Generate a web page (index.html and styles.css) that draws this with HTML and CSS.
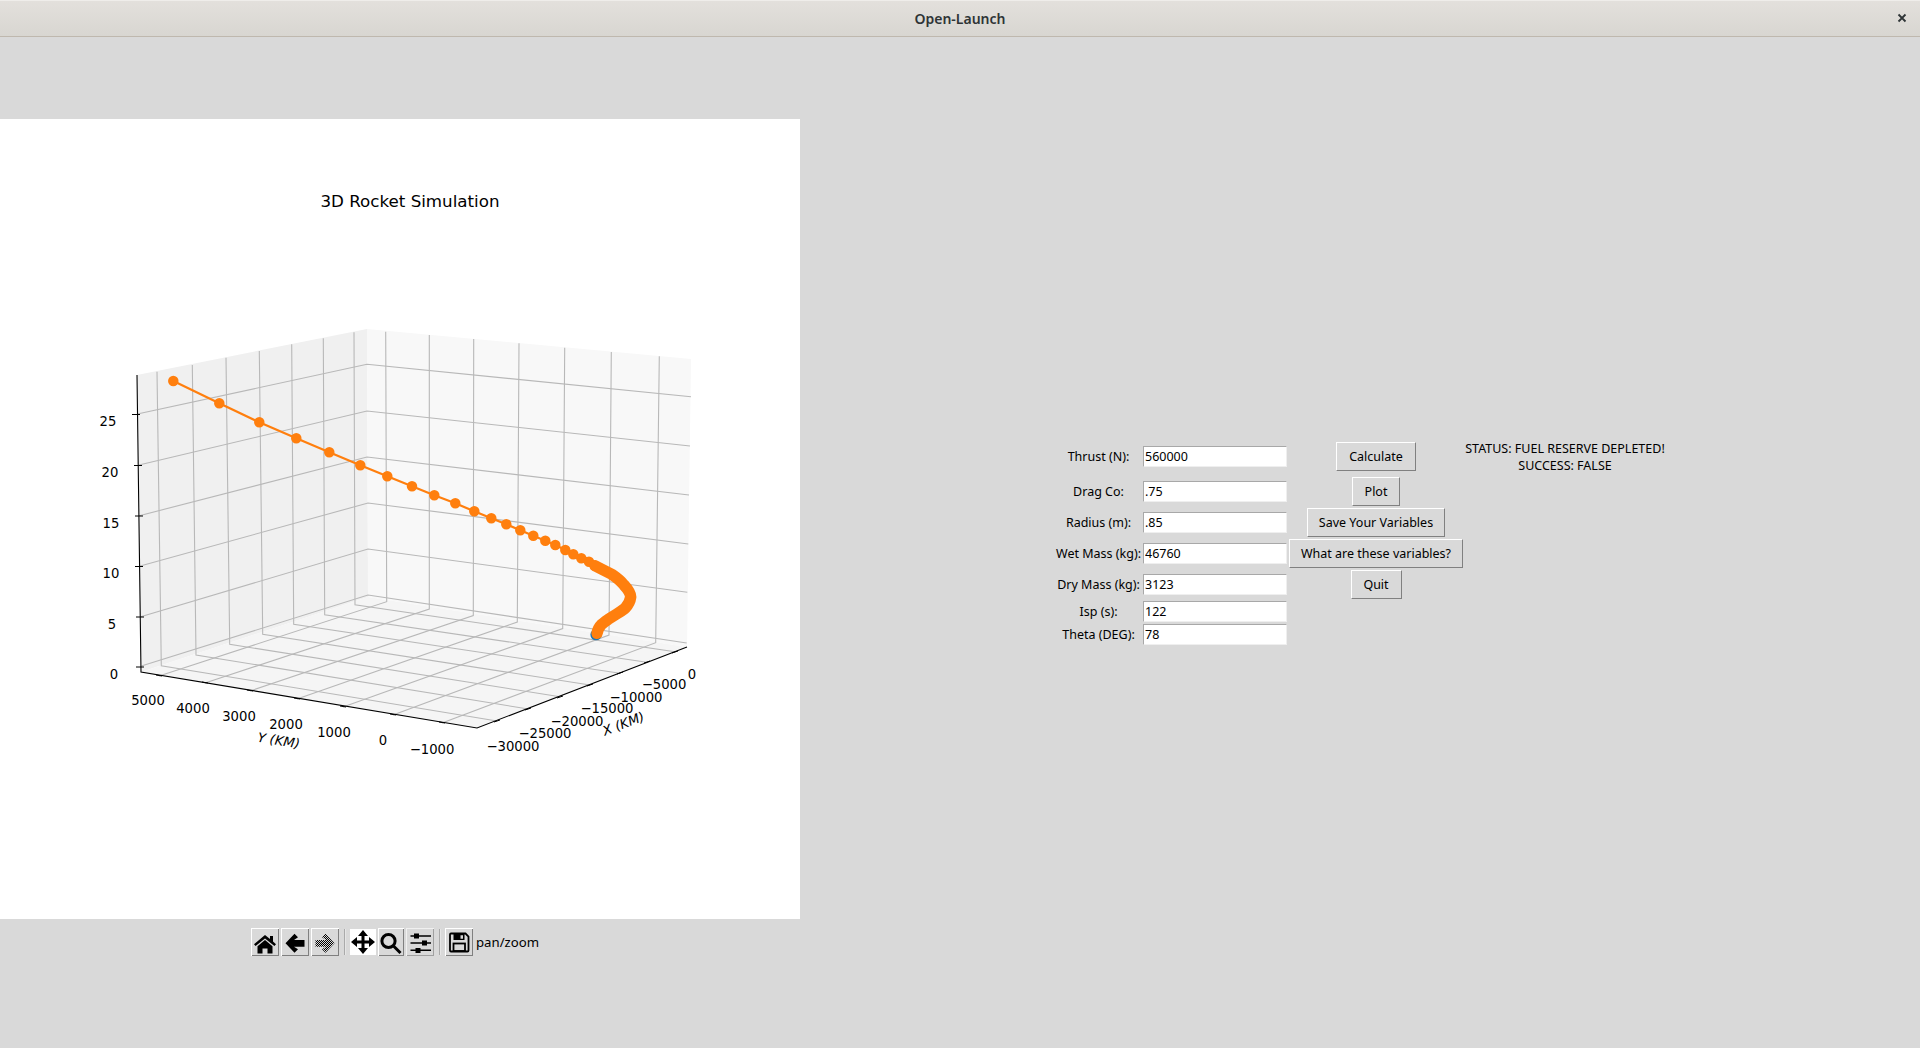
FILE: index.html
```html
<!DOCTYPE html>
<html lang="en">
<head>
  <meta charset="UTF-8" />
  <title>Open-Launch</title>
  <link rel="stylesheet" href="styles.css">
</head>
<body>

  <header class="titlebar">
    <span class="title">Open-Launch</span>
    <svg class="close" width="10" height="10" viewBox="0 0 10 10"><path d="M1.5 1.5l7 7M8.5 1.5l-7 7"/></svg>
  </header>

  <main class="window">
    <section class="left">
      <svg class="plot" width="800" height="800" viewBox="0 119 800 800">
        <defs>
          <pattern id="dither" width="2" height="2" patternUnits="userSpaceOnUse">
            <rect width="1" height="1" x="0" y="0" fill="#000"/>
            <rect width="1" height="1" x="1" y="1" fill="#000"/>
          </pattern>
        </defs>

        <text class="plot-title" x="410" y="207">3D Rocket Simulation</text>

        <!-- panes -->
        <polygon class="pane-left" points="137,375 367,329 368,597 141,672"/>
        <polygon class="pane-right" points="367,329 691,359 687,647 368,597"/>
        <polygon class="pane-floor" points="141,672 368,597 687,647 477,728"/>

        <!-- grid -->
        <path class="grid" d="M157 371.7L161.3 665.7L497 721M192.3 365L196 655L528.3 709M226 357.7L229.7 644.3L560 696.7M259.3 351L262.7 634.3L590 685M291.7 344.3L293.7 624.3L620 673.3M323.3 338.3L324.7 614.7L646.7 662.3M354 332.3L355 604.7L675 651.7"/>
        <path class="grid" d="M385.7 331.7L386.7 601.7L159 676M429.3 335L429.3 609L205 683M473.7 339L473.3 615.5L250 691M519 343.3L517.3 622L297 699M564.7 347.7L562.7 628.5L343 707M611.3 352L609 635L393 715M659.3 356.3L655.7 642.7L442 723"/>
        <path class="grid" d="M137.3 414L367 364.3L691 396.7M139 465L367 411L690 446M139.3 515.7L367 457L689 495M139.3 566.3L368 503L688.3 544M140.7 616.7L368 549L687.3 592.3M141.3 666L368 595L686.7 643"/>

        <!-- axes and ticks -->
        <path class="axis" d="M137 375L141 672L477 728L687 647"/>
        <path class="tick" d="M132 414.5h8M134 465.5h8M135 516h8M135 566.5h8M136 617h8M136 667h8"/>
        <path class="tick" d="M156 675l6 1M202 682l6 1M247 690l6 1M294 698l6 1M340 706l6 1M390 714l6 1M439 722l6 1"/>
        <path class="tick" d="M494 722l6-2M525 710l6-2M557 698l6-2M587 686l6-2M617 674l6-2M644 663l6-2M672 653l6-2"/>

        <!-- z labels -->
        <text class="tick-label" x="108" y="426">25</text>
        <text class="tick-label" x="110" y="477">20</text>
        <text class="tick-label" x="111" y="528">15</text>
        <text class="tick-label" x="111" y="578">10</text>
        <text class="tick-label" x="112" y="629">5</text>
        <text class="tick-label" x="114" y="679">0</text>

        <!-- y labels -->
        <text class="tick-label" x="148" y="705">5000</text>
        <text class="tick-label" x="193" y="713">4000</text>
        <text class="tick-label" x="239" y="721">3000</text>
        <text class="tick-label" x="286" y="729">2000</text>
        <text class="tick-label" x="334" y="737">1000</text>
        <text class="tick-label" x="383" y="745">0</text>
        <text class="tick-label" x="432" y="754">−1000</text>

        <!-- x labels -->
        <text class="tick-label" x="513" y="751">−30000</text>
        <text class="tick-label" x="545" y="738">−25000</text>
        <text class="tick-label" x="577" y="726">−20000</text>
        <text class="tick-label" x="607" y="713">−15000</text>
        <text class="tick-label" x="636" y="702">−10000</text>
        <text class="tick-label" x="664" y="689">−5000</text>
        <text class="tick-label" x="692" y="679">0</text>

        <text class="axis-label" transform="translate(278 745) rotate(9)">Y (KM)</text>
        <text class="axis-label" transform="translate(625 728) rotate(-21)">X (KM)</text>

        <!-- trajectory -->
        <circle class="start-dot" cx="596" cy="634.7" r="5.6"/>
        <path class="traj-line" d="M173.3 381L219.3 403.3L259.3 422.3L296.3 438.3L329.3 452.3L360.3 465.3L387.3 476.3L412 486.3L434.3 495.3L455.3 503.3L474.3 511.3L491.3 518.3L506.3 524.3L520.3 530.3L533.3 535.7L545.3 540.7L555.3 545L565.3 550L573.3 554.3L581.3 558.3L589 561.7L595 565.7"/>
        <path class="traj-dots" d="M173.3 381h0M219.3 403.3h0M259.3 422.3h0M296.3 438.3h0M329.3 452.3h0M360.3 465.3h0M387.3 476.3h0M412 486.3h0M434.3 495.3h0M455.3 503.3h0M474.3 511.3h0M491.3 518.3h0M506.3 524.3h0M520.3 530.3h0M533.3 535.7h0M545.3 540.7h0M555.3 545h0M565.3 550h0M573.3 554.3h0M581.3 558.3h0M589 561.7h0M595 565.7h0"/>
        <path class="traj-dense" d="M595 565.7L603.3 570L611.7 574.3Q620 580 624 585Q630.5 592 630.7 597Q630 603 625 608.3Q620 612 616.7 614L608.3 619.3Q603 623 601.7 624.3Q598 628 597 633.4"/>
      </svg>

      <nav class="toolbar">
        <button class="tool">
          <svg width="28" height="28" viewBox="0 0 28 28"><path d="M14 7L19 11V8H22V13.6L25 16.2L23.4 18L14 10.4L4.6 18L3 16.2Z"/><path d="M14 12L21.5 18.3V25.5H16.5V20.5H11.5V25.5H6.5V18.3Z"/></svg>
        </button>
        <button class="tool">
          <svg width="28" height="28" viewBox="0 0 28 28"><path d="M4.5 15.3L13.5 5.8L17 9.3L13 12H23.5V18.8H13L17 21.3L13.5 24.8Z"/></svg>
        </button>
        <button class="tool">
          <svg width="28" height="28" viewBox="0 0 28 28"><path fill="url(#dither)" d="M23.5 15.3L14.5 5.8L11 9.3L15 12H4.5V18.8H15L11 21.3L14.5 24.8Z"/></svg>
        </button>
        <span class="sep"></span>
        <button class="tool tool-active">
          <svg width="26" height="26" viewBox="0 0 26 26"><path d="M13 1L18 7H14.5V11.5H19V8L25 13L19 18V14.5H14.5V19H18L13 25L8 19H11.5V14.5H7V18L1 13L7 8V11.5H11.5V7H8Z"/></svg>
        </button>
        <button class="tool tool-narrow">
          <svg width="26" height="26" viewBox="0 0 26 26"><circle class="lens" cx="10.5" cy="12" r="6.6"/><path class="lens" d="M15.5 17L22.5 24"/></svg>
        </button>
        <button class="tool tool-flat">
          <svg width="28" height="28" viewBox="0 0 28 28"><path class="slider" d="M4.5 8H25M4.5 15H25M4.5 22.3H25"/><rect x="8" y="5.5" width="5" height="5"/><rect x="16" y="12.5" width="5" height="5"/><rect x="9.5" y="20" width="5" height="5"/></svg>
        </button>
        <span class="sep"></span>
        <button class="tool">
          <svg width="28" height="28" viewBox="0 0 28 28"><path class="disk" d="M6 5.5H20.5L23.5 8.5V22.5A1 1 0 0 1 22.5 23.5H6A1 1 0 0 1 5 22.5V6.5A1 1 0 0 1 6 5.5Z"/><path d="M8.5 6H19.5V12H8.5ZM15.5 7.2V10.8H18V7.2Z" fill-rule="evenodd"/><rect class="disk" x="8.5" y="15.5" width="11.5" height="7.5"/></svg>
        </button>
        <span class="mode">pan/zoom</span>
      </nav>
    </section>

    <form class="inputs">
      <label class="first">Thrust (N):</label>
      <input class="first" type="text" value="560000">
      <button type="button" class="btn first btn-calc">Calculate</button>
      <p class="status first">STATUS: FUEL RESERVE DEPLETED!<br>SUCCESS: FALSE</p>

      <label>Drag Co:</label>
      <input type="text" value=".75">
      <button type="button" class="btn btn-plot">Plot</button>
      <span></span>

      <label>Radius (m):</label>
      <input type="text" value=".85">
      <button type="button" class="btn btn-save">Save Your Variables</button>
      <span></span>

      <label>Wet Mass (kg):</label>
      <input type="text" value="46760">
      <button type="button" class="btn btn-what">What are these variables?</button>
      <span></span>

      <label>Dry Mass (kg):</label>
      <input type="text" value="3123">
      <button type="button" class="btn btn-quit">Quit</button>
      <span></span>

      <label>Isp (s):</label>
      <input type="text" value="122">
      <span></span>
      <span></span>

      <label>Theta (DEG):</label>
      <input type="text" value="78">
    </form>
  </main>

</body>
</html>
```

FILE: styles.css
```css
* {
  box-sizing: border-box;
}

html, body {
  margin: 0;
  height: 100%;
  overflow: hidden;
}

body {
  background-color: #d9d9d9;
  color: #000;
  font-family: "Noto Sans", sans-serif;
  font-size: 12.5px;
}

/* window title */
.titlebar {
  display: flex;
  align-items: center;
  justify-content: center;
  position: relative;
  height: 37px;
  background: linear-gradient(#e3e0dc, #d8d6d1);
  border-top: 1px solid #efedea;
  border-bottom: 1px solid #bfb8ae;
}

.title {
  font-size: 14px;
  font-weight: 600;
  color: #2e3436;
}

.close {
  position: absolute;
  right: 13px;
  top: 12px;
}

.close path {
  fill: none;
  stroke: #2e3436;
  stroke-width: 1.8;
}

.window {
  display: flex;
}

/* plot column */
.left {
  width: 800px;
  padding-top: 82px;
}

.plot {
  display: block;
  background: white;
}

.plot text {
  font-family: "DejaVu Sans", sans-serif;
  fill: #000;
}

.plot-title {
  font-size: 16.7px;
  text-anchor: middle;
}

.tick-label {
  font-size: 13.2px;
  text-anchor: middle;
  fill: #111;
}

.axis-label {
  font-size: 13.2px;
  font-style: oblique;
  text-anchor: middle;
}

.pane-left { fill: #f0f0f0; }
.pane-right { fill: #f8f8f8; }
.pane-floor { fill: #f5f5f5; }

.grid {
  fill: none;
  stroke: #b8b8b8;
  stroke-width: 1.1;
}

.axis {
  fill: none;
  stroke: #000;
  stroke-width: 1.1;
}

.tick {
  fill: none;
  stroke: #000;
  stroke-width: 1;
}

.start-dot {
  fill: #1f77b4;
}

.traj-line {
  fill: none;
  stroke: #ff7f0e;
  stroke-width: 2.2;
}

.traj-dots {
  fill: none;
  stroke: #ff7f0e;
  stroke-width: 10.5;
  stroke-linecap: round;
}

.traj-dense {
  fill: none;
  stroke: #ff7f0e;
  stroke-width: 11.4;
  stroke-linecap: round;
  stroke-linejoin: round;
}

/* toolbar */
.toolbar {
  display: flex;
  align-items: center;
  gap: 2px;
  height: 28px;
  margin-top: 9px;
  padding-left: 251px;
}

.tool {
  display: flex;
  align-items: center;
  justify-content: center;
  width: 28px;
  height: 28px;
  padding: 0;
  background: #d9d9d9;
  border: none;
  box-shadow: inset 1px 1px 0 #fff, inset -1px -1px 0 #808080;
}

.tool svg {
  display: block;
  flex: none;
}

.tool-active {
  width: 26px;
  height: 26px;
  background: #fff;
  box-shadow: none;
}

.tool-narrow {
  width: 26px;
  box-shadow: inset 1px 1px 0 #fff, inset -1px -1px 0 #808080;
}

.tool-flat {
  box-shadow: inset 1px 1px 0 #f0f0f0, inset -1px -1px 0 #a0a0a0;
}

.lens {
  fill: none;
  stroke: #000;
  stroke-width: 3;
}

.slider {
  fill: none;
  stroke: #000;
  stroke-width: 1.5;
}

.disk {
  fill: none;
  stroke: #000;
  stroke-width: 1.8;
}

.sep {
  width: 2px;
  height: 26px;
  margin-left: 3px;
  margin-right: 2px;
  border-left: 1px solid #aaa;
  border-right: 1px solid #e6e6e6;
}

.mode {
  margin-left: 1px;
  font-size: 13.2px;
}

/* form grid */
.inputs {
  display: grid;
  grid-template-columns: 85px 144px 174px 200px;
  grid-template-rows: 33px 29px 29px 29px 29px 21px 21px;
  column-gap: 2px;
  row-gap: 2px;
  align-items: center;
  justify-items: center;
  align-content: start;
  margin-left: 256px;
  padding-top: 405px;
}

.first {
  margin-bottom: 4px;
}

label {
  white-space: nowrap;
}

input {
  width: 144px;
  height: 21px;
  padding: 0 1px;
  background: white;
  border: 1px solid;
  border-color: #a8a8a8 #efefef #efefef #a8a8a8;
  border-radius: 0;
  font-family: inherit;
  font-size: 12.5px;
  color: #000;
  outline: none;
}

.btn {
  height: 29px;
  padding: 0;
  background: #d9d9d9;
  border: 1px solid;
  border-color: #fff #808080 #808080 #fff;
  border-radius: 0;
  font-family: inherit;
  font-size: 12.5px;
  color: #000;
}

.btn-calc { width: 80px; }
.btn-plot { width: 48px; }
.btn-save { width: 138px; }
.btn-what { width: 174px; }
.btn-quit { width: 51px; }

.status {
  margin-top: 0;
  line-height: 17px;
  text-align: center;
  white-space: nowrap;
}
```
